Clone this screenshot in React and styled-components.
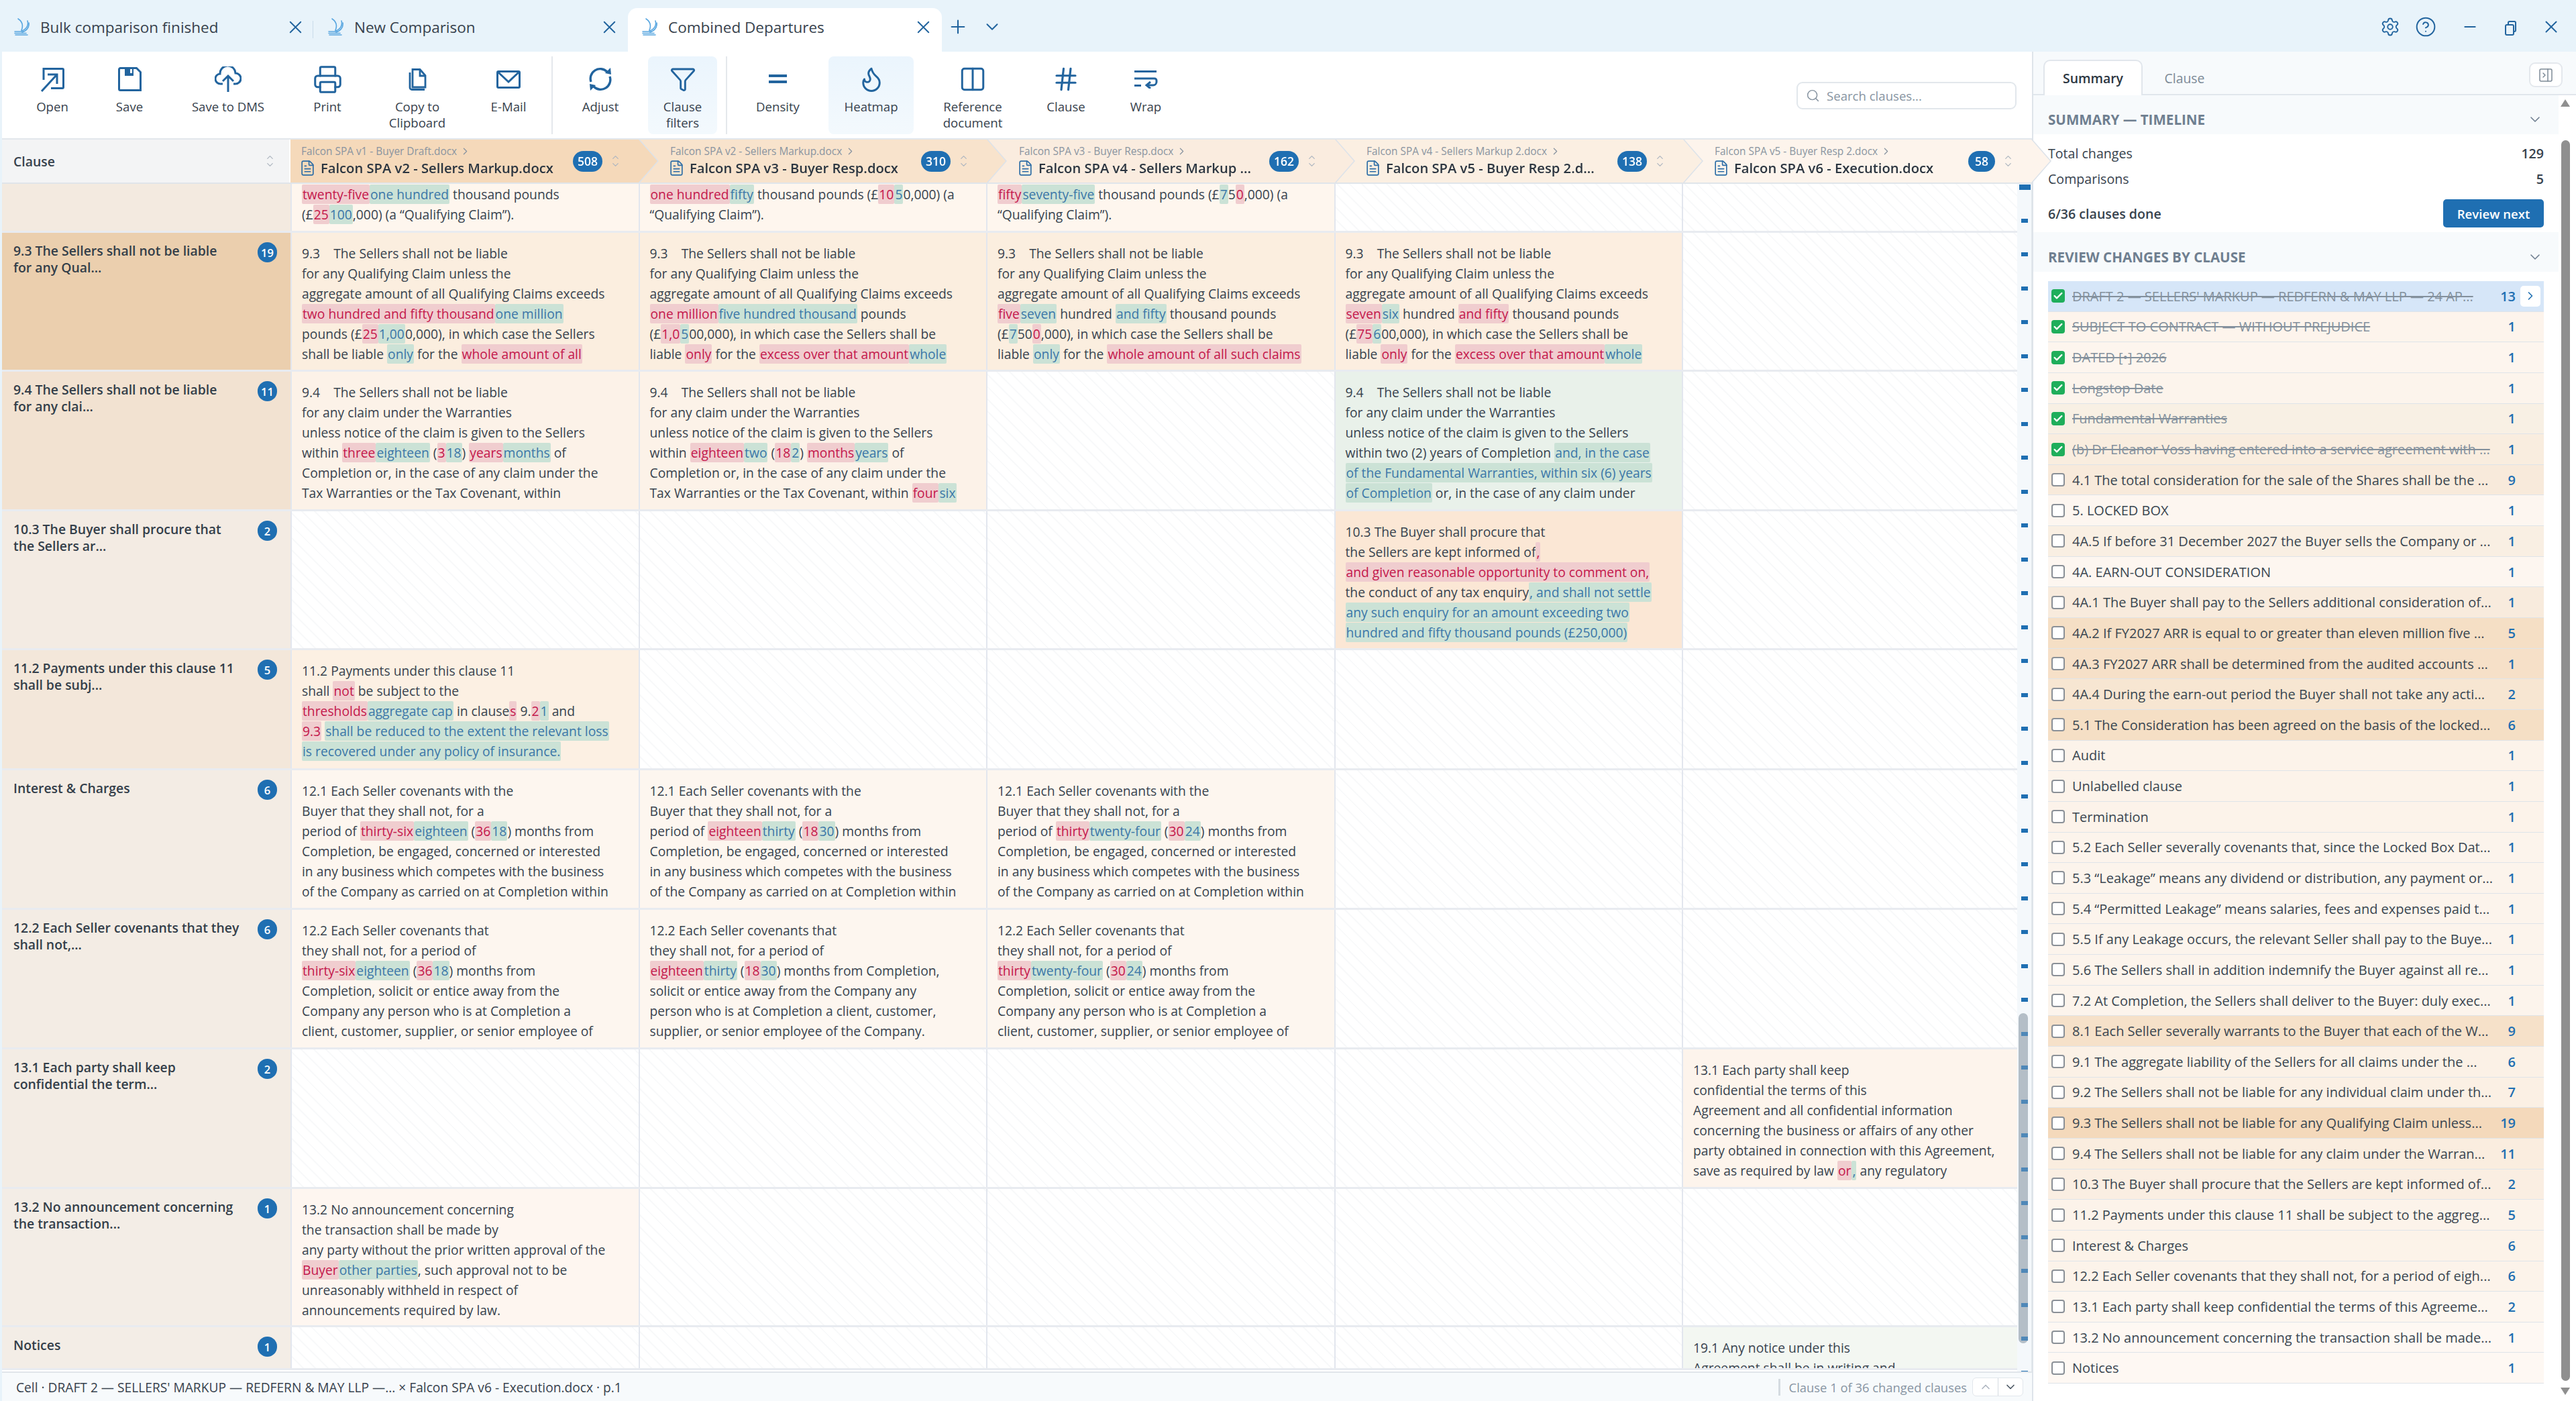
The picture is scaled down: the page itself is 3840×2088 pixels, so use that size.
import React from 'react';
import styled, { createGlobalStyle } from 'styled-components';
import { Printer, Funnel, Flame, Columns2, Hash, X, Plus, ChevronDown, ChevronUp, ChevronRight, Search, Settings, CircleHelp, Minus, FileText, PanelRightClose, Check } from 'lucide-react';

const FONT = '"Open Sans", "Noto Sans", sans-serif';
const BLUE = '#1F6FB2';
const ICON = '#22649E';
const TEXT = '#37424D';

const GlobalStyle = createGlobalStyle`
  html, body { margin: 0; padding: 0; background: #E8F3FA; }
  body { font-family: ${FONT}; color: ${TEXT}; }
  * { box-sizing: border-box; }
`;

const Window = styled.div`
  width: 3840px;
  height: 2088px;
  overflow: hidden;
  display: flex;
  flex-direction: column;
  background: #E8F3FA;
`;

/* title bar */
const TabBar = styled.div`
  height: 77px;
  flex: none;
  display: flex;
  align-items: flex-end;
`;
const Tab = styled.div`
  position: relative;
  width: 468px;
  height: 65px;
  display: flex;
  align-items: center;
  padding: 0 12px 9px 21px;
  font-size: 22.5px;
  background: ${({ $active }) => ($active ? '#fff' : 'transparent')};
  border-radius: ${({ $active }) => ($active ? '14px 14px 0 0' : '0')};
  &::after {
    content: '';
    display: ${({ $sep }) => ($sep ? 'block' : 'none')};
    position: absolute;
    right: 1px;
    top: 19px;
    width: 1px;
    height: 26px;
    background: #C9DCEA;
  }
`;
const TabTitle = styled.span`
  margin-left: 14px;
  flex: 1;
  white-space: nowrap;
`;
const TabTools = styled.div`
  display: flex;
  align-items: center;
  align-self: flex-start;
  margin: 24px 0 0 8px;
  gap: 20px;
  color: ${ICON};
`;
const WindowTools = styled.div`
  margin-left: auto;
  display: flex;
  align-items: center;
  align-self: flex-start;
  padding: 24px 5px 0 0;
  color: ${ICON};
`;
const WinBtn = styled.div`
  width: ${({ $w }) => $w}px;
  display: flex;
  justify-content: center;
`;

/* main area */
const Main = styled.div`
  flex: 1;
  display: flex;
  min-height: 0;
`;
const Workspace = styled.div`
  width: 3029px;
  padding-left: 3px;
  display: flex;
  flex-direction: column;
`;

/* toolbar */
const ToolBar = styled.div`
  height: 131px;
  flex: none;
  display: flex;
  background: #fff;
  padding: 7px 0 0 19px;
  border-bottom: 2px solid #E2E7EC;
`;
const ToolBtn = styled.div`
  width: ${({ $w }) => $w}px;
  height: 116px;
  flex: none;
  display: flex;
  flex-direction: column;
  align-items: center;
  padding-top: 14px;
  border-radius: 8px;
  color: ${ICON};
  background: ${({ $on }) => ($on ? 'linear-gradient(#EBF5FD, #F3F9FD)' : 'transparent')};
`;
const ToolIcon = styled.div`
  height: 40px;
  display: flex;
  align-items: center;
  justify-content: center;
`;
const ToolLabel = styled.div`
  margin-top: 9px;
  font-size: 18.6px;
  line-height: 24px;
  text-align: center;
  color: ${TEXT};
  white-space: pre-line;
`;
const ToolSep = styled.div`
  width: 2px;
  height: 116px;
  flex: none;
  background: #E4E8EC;
  margin: ${({ $m }) => $m};
`;
const SearchBox = styled.div`
  margin: 38px 23px 0 auto;
  width: 328px;
  height: 41px;
  flex: none;
  display: flex;
  align-items: center;
  gap: 10px;
  padding-left: 12px;
  border: 2px solid #E2E7EC;
  border-radius: 9px;
  color: #8794A1;
  font-size: 18.6px;
`;

/* column headers */
const HeadRow = styled.div`
  height: 66px;
  flex: none;
  display: flex;
  background: #fff;
  border-bottom: 2px solid #E0E5EA;
`;
const ClauseHead = styled.div`
  width: 430px;
  flex: none;
  display: flex;
  align-items: center;
  justify-content: space-between;
  padding: 0 22px 0 17px;
  background: #F3F4F5;
  font-size: 19.4px;
  font-weight: 600;
  border-right: 2px solid #fff;
`;
const HeadSlot = styled.div`
  width: 547px;
  flex: none;
  margin-right: -28px;
  position: relative;
  z-index: ${({ $z }) => $z};
  filter: drop-shadow(2px 0 0 #DCE2E9);
`;
const HeadShape = styled.div`
  height: 100%;
  display: flex;
  align-items: center;
  padding: 0 56px 0 ${({ $pad }) => $pad}px;
  background: ${({ $bg }) => $bg};
  clip-path: polygon(0 0, calc(100% - 28px) 0, 100% 50%, calc(100% - 28px) 100%, 0 100%);
`;
const HeadTitles = styled.div`
  flex: 1;
  min-width: 0;
`;
const HeadFrom = styled.div`
  display: flex;
  align-items: center;
  gap: 4px;
  height: 22px;
  margin-top: -2px;
  font-size: 15.4px;
  color: #8A94A0;
  white-space: nowrap;
`;
const HeadName = styled.div`
  display: flex;
  align-items: center;
  gap: 7px;
  height: 28px;
  font-size: 20.2px;
  font-weight: 600;
  color: #2B3540;
  white-space: nowrap;
  svg { flex: none; margin-left: -3px; color: #2C6DA6; }
`;
const HeadBadge = styled.div`
  margin-left: 12px;
  flex: none;
  height: 31px;
  min-width: 40px;
  padding: 0 7px;
  border-radius: 16px;
  background: ${BLUE};
  color: #fff;
  font-size: 17.5px;
  font-weight: 600;
  display: flex;
  align-items: center;
  justify-content: center;
`;
const SortWrap = styled.div`
  width: 14px;
  margin-left: 12px;
  flex: none;
  display: flex;
  flex-direction: column;
  align-items: center;
  gap: 2px;
  color: #AEB6C0;
`;

/* comparison grid */
const GridWrap = styled.div`
  flex: 1;
  min-height: 0;
  display: flex;
`;
const Grid = styled.div`
  width: 3004px;
  flex: none;
  overflow: hidden;
  background: #fff;
`;
const Row = styled.div`
  height: ${({ $h }) => $h}px;
  display: grid;
  grid-template-columns: 430px repeat(4, 518.5px) 1fr;
  overflow: hidden;
  border-bottom: 3px solid #E8EBF0;
`;
const LeftCell = styled.div`
  display: flex;
  justify-content: space-between;
  align-items: flex-start;
  gap: 8px;
  padding: 14px 20px 0 17px;
  background: ${({ $bg }) => $bg};
  overflow: hidden;
`;
const LeftText = styled.div`
  font-size: 19.4px;
  font-weight: 600;
  line-height: 25px;
  white-space: pre-line;
  color: #333E49;
`;
const Count = styled.div`
  min-width: 29px;
  height: 30px;
  padding: 0 5px;
  flex: none;
  border-radius: 15px;
  background: ${BLUE};
  color: #fff;
  font-size: 16.5px;
  font-weight: 600;
  display: flex;
  align-items: center;
  justify-content: center;
`;
const Cell = styled.div`
  border-left: 2px solid #E2E6EE;
  padding: ${({ $flush }) => ($flush ? '1px' : '16px')} 0 0 15px;
  overflow: hidden;
  background: ${({ $bg }) => $bg || 'repeating-linear-gradient(45deg, #fff 0 11px, #F8F9FA 11px 13px)'};
`;
const Line = styled.div`
  height: 30px;
  line-height: 30px;
  font-size: 19.3px;
  white-space: pre;
  color: #38434E;
`;
const Del = styled.span`
  background: #F0CDCF;
  color: #C4174B;
  padding: 1px 1px;
  border-radius: 2px;
`;
const Ins = styled.span`
  background: #CBE2D6;
  color: #3B77A8;
  padding: 1px 1px;
  border-radius: 2px;
`;

/* overview strip */
const Overview = styled.div`
  position: relative;
  width: 22px;
  flex: none;
  background: #F4F8FB;
  border-right: 1px solid #E2E7EC;
`;
const OverviewThumb = styled.div`
  position: absolute;
  left: 2px;
  width: 14px;
  top: 1236px;
  height: 492px;
  border-radius: 7px;
  background: #B4BEC7;
`;
const Tick = styled.div`
  position: absolute;
  left: ${({ $first }) => ($first ? 3 : 6)}px;
  width: ${({ $first }) => ($first ? 17 : 10)}px;
  height: ${({ $first }) => ($first ? 8 : 6)}px;
  background: ${({ $dim }) => ($dim ? '#4F88B8' : BLUE)};
`;

/* status bar */
const StatusBar = styled.div`
  height: 44px;
  flex: none;
  display: flex;
  align-items: center;
  background: #F7FAFC;
  border-top: 2px solid #E0E5EA;
  padding: 0 13px 0 21px;
  font-size: 19.2px;
  position: relative;
`;
const StatusText = styled.span`
  flex: 1;
  white-space: nowrap;
`;
const StatusCount = styled.span`
  border-left: 3px solid #D5DBE1;
  padding-left: 13px;
  font-size: 18.4px;
  color: #8895A3;
  white-space: nowrap;
`;
const StepGroup = styled.div`
  display: flex;
  margin-left: 8px;
  height: 28px;
  border: 1px solid #E2E7EC;
  border-radius: 6px;
  background: #fff;
`;
const StepBtn = styled.div`
  width: 37px;
  display: flex;
  align-items: center;
  justify-content: center;
  color: ${({ $off }) => ($off ? '#AEB6C0' : '#4B5763')};
  border-left: ${({ $off }) => ($off ? 'none' : '1px solid #D5DBE1')};
`;

/* side panel */
const Panel = styled.div`
  flex: 1;
  display: flex;
  flex-direction: column;
  background: #fff;
  border-left: 2px solid #DEE4EA;
`;
const PanelTabs = styled.div`
  height: 65px;
  flex: none;
  display: flex;
  align-items: flex-end;
  padding-left: 15px;
  background: #F7FAFC;
  border-bottom: 2px solid #E1E6EC;
  position: relative;
`;
const PanelTab = styled.div`
  width: ${({ $w }) => $w}px;
  height: 53px;
  margin-bottom: -2px;
  display: flex;
  align-items: center;
  justify-content: center;
  font-size: 19.4px;
  font-weight: ${({ $active }) => ($active ? 600 : 400)};
  color: ${({ $active }) => ($active ? '#2B3540' : '#7D8A97')};
  background: ${({ $active }) => ($active ? '#fff' : 'transparent')};
  border: 2px solid ${({ $active }) => ($active ? '#E1E6EC' : 'transparent')};
  border-bottom: none;
  border-radius: 10px 10px 0 0;
`;
const CollapseBtn = styled.div`
  margin: 0 20px auto auto;
  margin-top: 16px;
  width: 50px;
  height: 37px;
  border: 2px solid #E4E8ED;
  border-radius: 9px;
  background: #fff;
  display: flex;
  align-items: center;
  justify-content: center;
  color: #7D8A97;
`;
const PanelBody = styled.div`
  flex: 1;
  display: flex;
  min-height: 0;
`;
const PanelScroll = styled.div`
  flex: 1;
  min-width: 0;
`;
const SectionHead = styled.div`
  height: ${({ $h }) => $h}px;
  display: flex;
  align-items: center;
  justify-content: space-between;
  padding: 14px 23px 0 22px;
  background: #F7FAFC;
  color: #6F7F90;
  font-size: 20.6px;
  font-weight: 700;
`;
const SummaryBody = styled.div`
  padding: 9px 22px 0 22px;
  height: 146px;
  font-size: 19.6px;
`;
const StatRow = styled.div`
  height: 38px;
  display: flex;
  align-items: center;
  justify-content: space-between;
`;
const StatValue = styled.span`
  font-weight: 600;
`;
const ProgressRow = styled.div`
  margin-top: 12px;
  display: flex;
  align-items: center;
  justify-content: space-between;
  font-weight: 600;
`;
const ReviewBtn = styled.div`
  width: 150px;
  height: 42px;
  border-radius: 5px;
  background: ${BLUE};
  color: #fff;
  font-size: 18.6px;
  font-weight: 600;
  display: flex;
  align-items: center;
  justify-content: center;
`;
const ClauseList = styled.div`
  padding: 14px 22px 0 22px;
`;
const ListRow = styled.div`
  height: 45.65px;
  display: flex;
  align-items: center;
  padding-left: 5px;
  border-bottom: 1.5px solid #DFE4E9;
  background: ${({ $bg }) => $bg};
  font-size: 20px;
`;
const Box = styled.div`
  width: 20px;
  height: 20px;
  flex: none;
  margin-right: 11px;
  border-radius: 4px;
  display: flex;
  align-items: center;
  justify-content: center;
  color: #fff;
  background: ${({ $done }) => ($done ? '#1FAE5B' : '#fff')};
  border: ${({ $done }) => ($done ? 'none' : '2px solid #8A9097')};
`;
const ListText = styled.span`
  flex: 1;
  white-space: nowrap;
  overflow: hidden;
  color: ${({ $done }) => ($done ? '#83909C' : '#3A4650')};
  text-decoration: ${({ $done }) => ($done ? 'line-through' : 'none')};
`;
const ListCount = styled.span`
  margin-left: 4px;
  color: ${BLUE};
  font-weight: 600;
`;
const ListSlot = styled.div`
  width: 42px;
  flex: none;
  display: flex;
  justify-content: flex-end;
  padding-right: 5px;
`;
const OpenBtn = styled.div`
  width: 30px;
  height: 31px;
  border-radius: 5px;
  background: #fff;
  display: flex;
  align-items: center;
  justify-content: center;
  color: ${BLUE};
`;
const ScrollTrack = styled.div`
  width: 26px;
  flex: none;
  display: flex;
  flex-direction: column;
  align-items: center;
  padding: 6px 6px 9px 0;
`;
const ScrollArrow = styled.div`
  width: 0;
  height: 0;
  border-left: 7px solid transparent;
  border-right: 7px solid transparent;
  border-bottom: ${({ $down }) => ($down ? 'none' : '11px solid #8F8F8F')};
  border-top: ${({ $down }) => ($down ? '11px solid #8F8F8F' : 'none')};
`;
const ScrollThumb = styled.div`
  flex: 1;
  width: 13px;
  margin: 50px 0 10px;
  border-radius: 7px;
  background: #8F8F8F;
`;

const Swoosh = () => (
  <svg width="25" height="26" viewBox="0 0 25 26" fill="none" stroke="#58A6E0" strokeWidth="1.6" strokeLinecap="round">
    <path d="M6 1c6 4 8 10 5 17" />
    <path d="M20 4c2 7-2 13-9 15" />
    <path d="M22 7c1 6-3 12-10 14" />
    <path d="M1 20h13M1 22.5h17M2 25h18" />
  </svg>
);

const OpenIcon = () => (
  <svg width="37" height="38" viewBox="0 0 37 38" fill="none" stroke="currentColor" strokeWidth="3">
    <path d="M5 20V3.5h28a1.5 1.5 0 011.5 1.5v26a1.5 1.5 0 01-1.5 1.5H16" />
    <path d="M2 37L25 12M11 12h14v14" />
  </svg>
);
const SaveIcon = () => (
  <svg width="35" height="36" viewBox="0 0 35 36" fill="none" stroke="currentColor" strokeWidth="3">
    <path d="M3.500 1.500h24l6 6V34.500H3.500a2 2 0 01-2-2v-29a2 2 0 012-2z" />
    <path d="M10 2h13v11H10z" fill="currentColor" stroke="none" />
    <path d="M18 3h3v6h-3z" fill="#fff" stroke="none" />
  </svg>
);
const CloudIcon = () => (
  <svg width="40" height="38" viewBox="0 0 40 38" fill="none" stroke="currentColor" strokeWidth="3">
    <path d="M12 26H9a7.500 7.500 0 01-1-15 11.500 11.500 0 0123-1 8 8 0 010 16h-3" />
    <path d="M20 38V15M12 22l8-8 8 8" />
  </svg>
);
const CopyIcon = () => (
  <svg width="28" height="33" viewBox="0 0 28 33" fill="none" stroke="currentColor" strokeWidth="2.800">
    <path d="M7 1.500h11l8 9V28H7z" />
    <path d="M18 2v9h8" />
    <path d="M3 6v22.500a3 3 0 003 3h19" />
  </svg>
);
const MailIcon = () => (
  <svg width="36" height="27" viewBox="0 0 36 27" fill="none" stroke="currentColor" strokeWidth="3">
    <rect x="1.500" y="1.500" width="33" height="24" rx="1.500" />
    <path d="M3 3l15 14L33 3" />
  </svg>
);
const AdjustIcon = () => (
  <svg width="34" height="36" viewBox="0 0 34 36" fill="none" stroke="currentColor" strokeWidth="3.400">
    <path d="M3 22A14.500 14.500 0 0127 7" />
    <path d="M31 14A14.500 14.500 0 017 29" />
    <path d="M33 11l-1-10-8 8z" fill="currentColor" stroke="none" />
    <path d="M1 25l1 10 8-8z" fill="currentColor" stroke="none" />
  </svg>
);
const DensityIcon = () => (
  <svg width="27" height="16" viewBox="0 0 27 16" fill="currentColor">
    <rect width="27" height="4" y="1" />
    <rect width="27" height="4" y="10" />
  </svg>
);
const WrapIcon = () => (
  <svg width="36" height="28" viewBox="0 0 36 28" fill="none" stroke="currentColor" strokeWidth="3">
    <path d="M1 2.500h33M1 13h30a3 3 0 013 3v2a5 5 0 01-5 5H21" />
    <path d="M1 23.500h10M25 18l-6 5 6 5" />
  </svg>
);

const Sort = () => (
  <SortWrap>
    <ChevronUp size={15} strokeWidth={2} />
    <ChevronDown size={15} strokeWidth={2} style={{ marginTop: -6 }} />
  </SortWrap>
);

const TOOLS = [
  { label: 'Open', w: 112, icon: <OpenIcon /> },
  { label: 'Save', w: 118, icon: <SaveIcon /> },
  { label: 'Save to DMS', w: 176, icon: <CloudIcon /> },
  { label: 'Print', w: 120, icon: <Printer size={45} strokeWidth={1.600} /> },
  { label: 'Copy to\nClipboard', w: 148, icon: <CopyIcon /> },
  { label: 'E-Mail', w: 124, icon: <MailIcon /> },
  { sep: '0 0 0 2px' },
  { label: 'Adjust', w: 142, icon: <AdjustIcon /> },
  { label: 'Clause\nfilters', w: 103, on: true, icon: <Funnel size={40} strokeWidth={1.700} /> },
  { sep: '0 0 0 13px' },
  { label: 'Density', w: 151, icon: <DensityIcon /> },
  { label: 'Heatmap', w: 127, on: true, icon: <Flame size={42} strokeWidth={1.700} /> },
  { label: 'Reference\ndocument', w: 176, icon: <Columns2 size={42} strokeWidth={1.700} /> },
  { label: 'Clause', w: 102, icon: <Hash size={42} strokeWidth={1.800} /> },
  { label: 'Wrap', w: 136, icon: <WrapIcon /> },
];

const HEADS = [
  { from: 'Falcon SPA v1 - Buyer Draft.docx', name: 'Falcon SPA v2 - Sellers Markup.docx', n: 508, bg: '#F5D9BA', pad: 16 },
  { from: 'Falcon SPA v2 - Sellers Markup.docx', name: 'Falcon SPA v3 - Buyer Resp.docx', n: 310, bg: '#F8E3CC', pad: 47 },
  { from: 'Falcon SPA v3 - Buyer Resp.docx', name: 'Falcon SPA v4 - Sellers Markup ...', n: 162, bg: '#FAECDF', pad: 48 },
  { from: 'Falcon SPA v4 - Sellers Markup 2.docx', name: 'Falcon SPA v5 - Buyer Resp 2.d...', n: 138, bg: '#FBEFE2', pad: 47 },
  { from: 'Falcon SPA v5 - Buyer Resp 2.docx', name: 'Falcon SPA v6 - Execution.docx', n: 58, bg: '#FDF4EC', pad: 47 },
];

const ROWS = [
  {
    h: 73, bg: '#F3EAE0', flush: true,
    cells: [
      { bg: '#FEF6EE', lines: ['[-twenty-five-]{+one hundred+} thousand pounds', '(£[-25-]{+100+},000) (a “Qualifying Claim”).'] },
      { bg: '#FEF6EE', lines: ['[-one hundred-]{+fifty+} thousand pounds (£[-10-]{+5+}0,000) (a', '“Qualifying Claim”).'] },
      { bg: '#FEF6EE', lines: ['[-fifty-]{+seventy-five+} thousand pounds (£{+7+}5[-0-],000) (a', '“Qualifying Claim”).'] },
    ],
  },
  {
    h: 207, bg: '#EBCFAE', label: '9.3 The Sellers shall not be liable\nfor any Qual...', n: 19,
    cells: [
      { bg: '#FBEEDF', lines: ['9.3    The Sellers shall not be liable', 'for any Qualifying Claim unless the', 'aggregate amount of all Qualifying Claims exceeds', '[-two hundred and fifty thousand-]{+one million+}', 'pounds (£[-25-]{+1,00+}0,000), in which case the Sellers', 'shall be liable {+only+} for the [-whole amount of all-]'] },
      { bg: '#FBEEDF', lines: ['9.3    The Sellers shall not be liable', 'for any Qualifying Claim unless the', 'aggregate amount of all Qualifying Claims exceeds', '[-one million-]{+five hundred thousand+} pounds', '(£[-1,0-]{+5+}00,000), in which case the Sellers shall be', 'liable [-only-] for the [-excess over that amount-]{+whole+}'] },
      { bg: '#FBEEDF', lines: ['9.3    The Sellers shall not be liable', 'for any Qualifying Claim unless the', 'aggregate amount of all Qualifying Claims exceeds', '[-five-]{+seven+} hundred {+and fifty+} thousand pounds', '(£{+7+}50[-0-],000), in which case the Sellers shall be', 'liable {+only+} for the [-whole amount of all such claims-]'] },
      { bg: '#FCEEE0', lines: ['9.3    The Sellers shall not be liable', 'for any Qualifying Claim unless the', 'aggregate amount of all Qualifying Claims exceeds', '[-seven-]{+six+} hundred [-and fifty-] thousand pounds', '(£[-75-]{+6+}00,000), in which case the Sellers shall be', 'liable [-only-] for the [-excess over that amount-]{+whole+}'] },
    ],
  },
  {
    h: 208, bg: '#F2E2D1', label: '9.4 The Sellers shall not be liable\nfor any clai...', n: 11,
    cells: [
      { bg: '#FCF2E8', lines: ['9.4    The Sellers shall not be liable', 'for any claim under the Warranties', 'unless notice of the claim is given to the Sellers', 'within [-three-]{+eighteen+} ([-3-]{+18+}) [-years-]{+months+} of', 'Completion or, in the case of any claim under the', 'Tax Warranties or the Tax Covenant, within'] },
      { bg: '#FCF2E8', lines: ['9.4    The Sellers shall not be liable', 'for any claim under the Warranties', 'unless notice of the claim is given to the Sellers', 'within [-eighteen-]{+two+} ([-18-]{+2+}) [-months-]{+years+} of', 'Completion or, in the case of any claim under the', 'Tax Warranties or the Tax Covenant, within [-four-]{+six+}'] },
      null,
      { bg: '#E9F1EA', lines: ['9.4    The Sellers shall not be liable', 'for any claim under the Warranties', 'unless notice of the claim is given to the Sellers', 'within two (2) years of Completion {+and, in the case+}', '{+of the Fundamental Warranties, within six (6) years+}', '{+of Completion+} or, in the case of any claim under'] },
    ],
  },
  {
    h: 207, bg: '#F3EBE3', label: '10.3 The Buyer shall procure that\nthe Sellers ar...', n: 2,
    cells: [null, null, null,
      { bg: '#FBE7D5', lines: ['10.3 The Buyer shall procure that', 'the Sellers are kept informed of[-,-]', '[-and given reasonable opportunity to comment on,-]', 'the conduct of any tax enquiry{+, and shall not settle+}', '{+any such enquiry for an amount exceeding two+}', '{+hundred and fifty thousand pounds (£250,000)+}'] },
    ],
  },
  {
    h: 179, bg: '#F3E7DA', label: '11.2 Payments under this clause 11\nshall be subj...', n: 5,
    cells: [
      { bg: '#FCF0E3', lines: ['11.2 Payments under this clause 11', 'shall [-not-] be subject to the', '[-thresholds-]{+aggregate cap+} in clause[-s-] 9.[-2-]{+1+} and', '[-9.3-] {+shall be reduced to the extent the relevant loss+}', '{+is recovered under any policy of insurance.+}'] },
    ],
  },
  {
    h: 208, bg: '#F3ECE4', label: 'Interest & Charges', n: 6,
    cells: [
      { bg: '#FDF6EF', lines: ['12.1 Each Seller covenants with the', 'Buyer that they shall not, for a', 'period of [-thirty-six-]{+eighteen+} ([-36-]{+18+}) months from', 'Completion, be engaged, concerned or interested', 'in any business which competes with the business', 'of the Company as carried on at Completion within'] },
      { bg: '#FDF6EF', lines: ['12.1 Each Seller covenants with the', 'Buyer that they shall not, for a', 'period of [-eighteen-]{+thirty+} ([-18-]{+30+}) months from', 'Completion, be engaged, concerned or interested', 'in any business which competes with the business', 'of the Company as carried on at Completion within'] },
      { bg: '#FDF6EF', lines: ['12.1 Each Seller covenants with the', 'Buyer that they shall not, for a', 'period of [-thirty-]{+twenty-four+} ([-30-]{+24+}) months from', 'Completion, be engaged, concerned or interested', 'in any business which competes with the business', 'of the Company as carried on at Completion within'] },
    ],
  },
  {
    h: 208, bg: '#F3ECE4', label: '12.2 Each Seller covenants that they\nshall not,...', n: 6,
    cells: [
      { bg: '#FDF6EF', lines: ['12.2 Each Seller covenants that', 'they shall not, for a period of', '[-thirty-six-]{+eighteen+} ([-36-]{+18+}) months from', 'Completion, solicit or entice away from the', 'Company any person who is at Completion a', 'client, customer, supplier, or senior employee of'] },
      { bg: '#FDF6EF', lines: ['12.2 Each Seller covenants that', 'they shall not, for a period of', '[-eighteen-]{+thirty+} ([-18-]{+30+}) months from Completion,', 'solicit or entice away from the Company any', 'person who is at Completion a client, customer,', 'supplier, or senior employee of the Company.'] },
      { bg: '#FDF6EF', lines: ['12.2 Each Seller covenants that', 'they shall not, for a period of', '[-thirty-]{+twenty-four+} ([-30-]{+24+}) months from', 'Completion, solicit or entice away from the', 'Company any person who is at Completion a', 'client, customer, supplier, or senior employee of'] },
    ],
  },
  {
    h: 208, bg: '#F3ECE4', label: '13.1 Each party shall keep\nconfidential the term...', n: 2,
    cells: [null, null, null, null,
      { bg: '#FDF4EC', lines: ['13.1 Each party shall keep', 'confidential the terms of this', 'Agreement and all confidential information', 'concerning the business or affairs of any other', 'party obtained in connection with this Agreement,', 'save as required by law [-or-]{+,+} any regulatory'] },
    ],
  },
  {
    h: 206, bg: '#F3EDE6', label: '13.2 No announcement concerning\nthe transaction...', n: 1,
    cells: [
      { bg: '#FEF6F0', lines: ['13.2 No announcement concerning', 'the transaction shall be made by', 'any party without the prior written approval of the', '[-Buyer-]{+other parties+}, such approval not to be', 'unreasonably withheld in respect of', 'announcements required by law.'] },
    ],
  },
  {
    h: 64, bg: '#F3EDE6', label: 'Notices', n: 1, last: true,
    cells: [null, null, null, null,
      { bg: '#F3F7F2', lines: ['19.1 Any notice under this', 'Agreement shall be in writing and'] },
    ],
  },
];

const LIST = [
  ['DRAFT 2 — SELLERS\' MARKUP — REDFERN & MAY LLP — 24 AP...', 13, '#D6E6F8', true],
  ['SUBJECT TO CONTRACT — WITHOUT PREJUDICE', 1, '#FDF4EC', true],
  ['DATED [•] 2026', 1, '#FDF5EE', true],
  ['Longstop Date', 1, '#FCF4EC', true],
  ['Fundamental Warranties', 1, '#F8F0E4', true],
  ['(b) Dr Eleanor Voss having entered into a service agreement with ...', 1, '#F9EDDF', true],
  ['4.1 The total consideration for the sale of the Shares shall be the ...', 9, '#F8EADB'],
  ['5. LOCKED BOX', 1, '#FDF6F0'],
  ['4A.5 If before 31 December 2027 the Buyer sells the Company or ...', 1, '#F9EFE3'],
  ['4A. EARN-OUT CONSIDERATION', 1, '#FDF6F0'],
  ['4A.1 The Buyer shall pay to the Sellers additional consideration of...', 1, '#F8EBDD'],
  ['4A.2 If FY2027 ARR is equal to or greater than eleven million five ...', 5, '#F5DFC5'],
  ['4A.3 FY2027 ARR shall be determined from the audited accounts ...', 1, '#F6E0C8'],
  ['4A.4 During the earn-out period the Buyer shall not take any acti...', 2, '#F7E6D2'],
  ['5.1 The Consideration has been agreed on the basis of the locked...', 6, '#F5DFC5'],
  ['Audit', 1, '#FCF3EA'],
  ['Unlabelled clause', 1, '#FCF3EA'],
  ['Termination', 1, '#FCF3EA'],
  ['5.2 Each Seller severally covenants that, since the Locked Box Dat...', 1, '#FCF4EC'],
  ['5.3 “Leakage” means any dividend or distribution, any payment or...', 1, '#FCF4EC'],
  ['5.4 “Permitted Leakage” means salaries, fees and expenses paid t...', 1, '#FCF4EC'],
  ['5.5 If any Leakage occurs, the relevant Seller shall pay to the Buye...', 1, '#FCF4EC'],
  ['5.6 The Sellers shall in addition indemnify the Buyer against all re...', 1, '#FCF4EC'],
  ['7.2 At Completion, the Sellers shall deliver to the Buyer: duly exec...', 1, '#FCF4EC'],
  ['8.1 Each Seller severally warrants to the Buyer that each of the W...', 9, '#F6E1C9'],
  ['9.1 The aggregate liability of the Sellers for all claims under the ...', 6, '#FBF1E6'],
  ['9.2 The Sellers shall not be liable for any individual claim under th...', 7, '#FBF0E4'],
  ['9.3 The Sellers shall not be liable for any Qualifying Claim unless...', 19, '#F4D9BB'],
  ['9.4 The Sellers shall not be liable for any claim under the Warran...', 11, '#FAEDDF'],
  ['10.3 The Buyer shall procure that the Sellers are kept informed of...', 2, '#FAEEE2'],
  ['11.2 Payments under this clause 11 shall be subject to the aggreg...', 5, '#FCF3EA'],
  ['Interest & Charges', 6, '#FCF3E9'],
  ['12.2 Each Seller covenants that they shall not, for a period of eigh...', 6, '#FCF3EA'],
  ['13.1 Each party shall keep confidential the terms of this Agreeme...', 2, '#FDF6EF'],
  ['13.2 No announcement concerning the transaction shall be made...', 1, '#FEF8F3'],
  ['Notices', 1, '#FEF8F3'],
];

const marked = (line) =>
  line.split(/(\[-.*?-\]|\{\+.*?\+\})/).map((part, i) => {
    if (part.startsWith('[-')) return <Del key={i}>{part.slice(2, -2)}</Del>;
    if (part.startsWith('{+')) return <Ins key={i}>{part.slice(2, -2)}</Ins>;
    return part;
  });

const TabItem = ({ title, active, sep }) => (
  <Tab $active={active} $sep={sep}>
    <Swoosh />
    <TabTitle>{title}</TabTitle>
    <X size={31} strokeWidth={1.500} color={ICON} />
  </Tab>
);

export default function App() {
  const ticks = Array.from({ length: 36 }, (_, i) => 1 + i * 50.5);
  return (
    <>
      <GlobalStyle />
      <Window>
        <TabBar>
          <TabItem title="Bulk comparison finished" sep />
          <TabItem title="New Comparison" />
          <TabItem title="Combined Departures" active />
          <TabTools>
            <Plus size={32} strokeWidth={1.600} />
            <ChevronDown size={30} strokeWidth={1.600} />
          </TabTools>
          <WindowTools>
            <WinBtn $w={40}><Settings size={30} strokeWidth={1.500} /></WinBtn>
            <WinBtn $w={66}><CircleHelp size={32} strokeWidth={1.500} /></WinBtn>
            <WinBtn $w={66}><Minus size={26} strokeWidth={2} /></WinBtn>
            <WinBtn $w={56}>
              <svg width="20" height="24" viewBox="0 0 20 24" fill="none" stroke="currentColor" strokeWidth="2" style={{ marginTop: 3 }}>
                <rect x="2" y="7" width="12" height="15" rx="2" />
                <path d="M6 6V4a2 2 0 012-2h7a2 2 0 012 2v11a2 2 0 01-2 2h-1" />
              </svg>
            </WinBtn>
            <WinBtn $w={64}><X size={30} strokeWidth={1.600} /></WinBtn>
          </WindowTools>
        </TabBar>
        <Main>
          <Workspace>
            <ToolBar>
              {TOOLS.map((t, i) =>
                t.sep ? (
                  <ToolSep key={i} $m={t.sep} />
                ) : (
                  <ToolBtn key={i} $w={t.w} $on={t.on}>
                    <ToolIcon>{t.icon}</ToolIcon>
                    <ToolLabel>{t.label}</ToolLabel>
                  </ToolBtn>
                ),
              )}
              <SearchBox>
                <Search size={21} strokeWidth={1.700} />
                Search clauses...
              </SearchBox>
            </ToolBar>
            <HeadRow>
              <ClauseHead>Clause<Sort /></ClauseHead>
              {HEADS.map((h, i) => (
                <HeadSlot key={h.name} $z={10 - i}>
                  <HeadShape $bg={h.bg} $pad={h.pad}>
                    <HeadTitles>
                      <HeadFrom>{h.from}<ChevronRight size={17} strokeWidth={1.800} /></HeadFrom>
                      <HeadName>
                        <FileText size={25} strokeWidth={1.600} />
                        <span>{h.name}</span>
                      </HeadName>
                    </HeadTitles>
                    <HeadBadge>{h.n}</HeadBadge>
                    <Sort />
                  </HeadShape>
                </HeadSlot>
              ))}
            </HeadRow>
            <GridWrap>
              <Grid>
                {ROWS.map((r, ri) => (
                  <Row key={ri} $h={r.h}>
                    <LeftCell $bg={r.bg}>
                      <LeftText>{r.label}</LeftText>
                      {r.n && <Count>{r.n}</Count>}
                    </LeftCell>
                    {[0, 1, 2, 3, 4].map((c) => {
                      const cell = r.cells[c];
                      return (
                        <Cell key={c} $bg={cell && cell.bg} $flush={r.flush}>
                          {cell && cell.lines.map((l, li) => <Line key={li}>{marked(l)}</Line>)}
                        </Cell>
                      );
                    })}
                  </Row>
                ))}
              </Grid>
              <Overview>
                <OverviewThumb />
                {ticks.map((top, i) => (
                  <Tick key={i} $first={i === 0} $dim={top > 1236 && top < 1728} style={{ top }} />
                ))}
              </Overview>
            </GridWrap>
            <StatusBar>
              <StatusText>Cell · DRAFT 2 — SELLERS' MARKUP — REDFERN &amp; MAY LLP —... × Falcon SPA v6 - Execution.docx · p.1</StatusText>
              <StatusCount>Clause 1 of 36 changed clauses</StatusCount>
              <StepGroup>
                <StepBtn $off><ChevronUp size={20} strokeWidth={2} /></StepBtn>
                <StepBtn><ChevronDown size={20} strokeWidth={2} /></StepBtn>
              </StepGroup>
            </StatusBar>
          </Workspace>
          <Panel>
            <PanelTabs>
              <PanelTab $w={148} $active>Summary</PanelTab>
              <PanelTab $w={125}>Clause</PanelTab>
              <CollapseBtn><PanelRightClose size={24} strokeWidth={1.500} /></CollapseBtn>
            </PanelTabs>
            <PanelBody>
              <PanelScroll>
                <SectionHead $h={58}>SUMMARY — TIMELINE<ChevronDown size={24} strokeWidth={1.600} /></SectionHead>
                <SummaryBody>
                  <StatRow>Total changes<StatValue>129</StatValue></StatRow>
                  <StatRow>Comparisons<StatValue>5</StatValue></StatRow>
                  <ProgressRow>6/36 clauses done<ReviewBtn>Review next</ReviewBtn></ProgressRow>
                </SummaryBody>
                <SectionHead $h={59}>REVIEW CHANGES BY CLAUSE<ChevronDown size={24} strokeWidth={1.600} /></SectionHead>
                <ClauseList>
                  {LIST.map(([text, n, bg, done], i) => (
                    <ListRow key={i} $bg={bg}>
                      <Box $done={done}>{done && <Check size={16} strokeWidth={3.500} />}</Box>
                      <ListText $done={done}>{text}</ListText>
                      <ListCount>{n}</ListCount>
                      <ListSlot>{i === 0 && <OpenBtn><ChevronRight size={20} strokeWidth={2} /></OpenBtn>}</ListSlot>
                    </ListRow>
                  ))}
                </ClauseList>
              </PanelScroll>
              <ScrollTrack>
                <ScrollArrow />
                <ScrollThumb />
                <ScrollArrow $down />
              </ScrollTrack>
            </PanelBody>
          </Panel>
        </Main>
      </Window>
    </>
  );
}
